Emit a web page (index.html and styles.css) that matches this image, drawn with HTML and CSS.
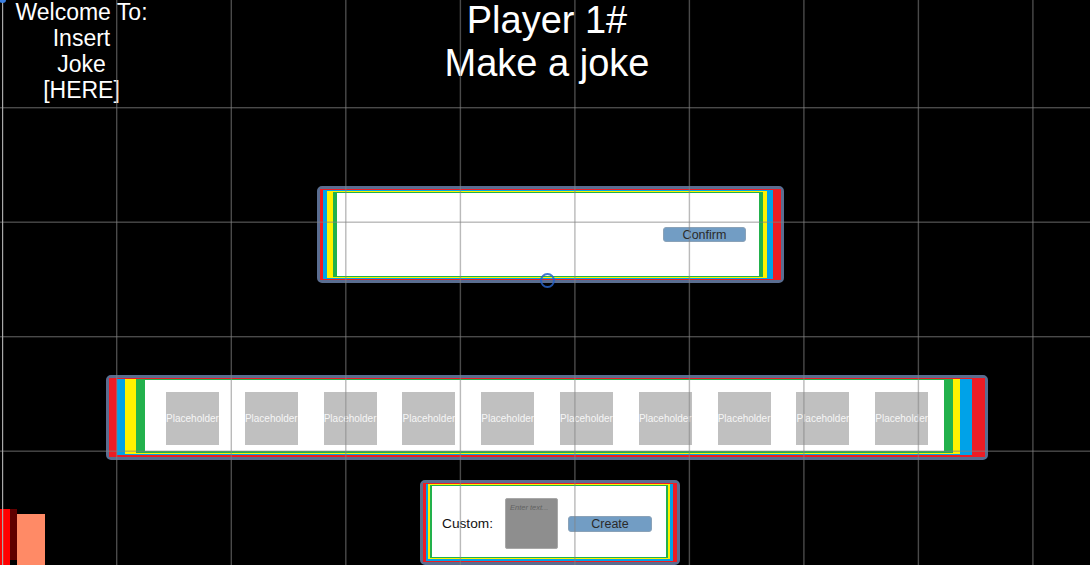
FILE: index.html
```html
<!DOCTYPE html>
<html lang="en">
<head>
<meta charset="utf-8">
<title>Make a joke</title>
<link rel="stylesheet" href="styles.css">
</head>
<body>
<div class="stage">
  <header class="header">
    <div class="welcome">Welcome To:<br>Insert<br>Joke<br>[HERE]</div>
    <h1 class="title">Player 1#<br>Make a joke</h1>
  </header>

  <section class="panel panel-confirm">
    <div class="lay red"><div class="lay blue"><div class="lay yellow"><div class="lay green">
      <div class="inner confirm-inner">
        <button class="btn btn-confirm">Confirm</button>
      </div>
    </div></div></div></div>
    <span class="pivot"></span>
  </section>

  <section class="panel panel-cards">
    <div class="lay red"><div class="lay blue"><div class="lay yellow"><div class="lay green">
      <div class="inner cards-inner">
        <div class="ph">Placeholder</div>
        <div class="ph">Placeholder</div>
        <div class="ph">Placeholder</div>
        <div class="ph">Placeholder</div>
        <div class="ph">Placeholder</div>
        <div class="ph">Placeholder</div>
        <div class="ph">Placeholder</div>
        <div class="ph">Placeholder</div>
        <div class="ph">Placeholder</div>
        <div class="ph">Placeholder</div>
      </div>
    </div></div></div></div>
  </section>

  <div class="bottom-row">
    <div class="corner">
      <span class="c-red"></span>
      <span class="c-dark"></span>
      <span class="c-salmon"></span>
    </div>
    <section class="panel panel-custom">
      <div class="lay red"><div class="lay blue"><div class="lay yellow"><div class="lay green">
        <div class="inner custom-inner">
          <span class="custom-label">Custom:</span>
          <div class="field"><span class="field-ph">Enter text...</span></div>
          <button class="btn btn-create">Create</button>
        </div>
      </div></div></div></div>
    </section>
  </div>

  <svg class="grid" width="1090" height="565" viewBox="0 0 1090 565" aria-hidden="true">
    <g fill="rgba(132,132,132,0.56)">
      <rect x="116" y="0" width="1.4" height="565"/>
      <rect x="230.6" y="0" width="1.4" height="565"/>
      <rect x="345.1" y="0" width="1.4" height="565"/>
      <rect x="459.7" y="0" width="1.4" height="565"/>
      <rect x="574.2" y="0" width="1.4" height="565"/>
      <rect x="688.7" y="0" width="1.4" height="565"/>
      <rect x="803.2" y="0" width="1.4" height="565"/>
      <rect x="917.7" y="0" width="1.4" height="565"/>
      <rect x="1032.2" y="0" width="1.4" height="565"/>
      <rect x="0" y="107" width="1090" height="1.4"/>
      <rect x="0" y="221.5" width="1090" height="1.4"/>
      <rect x="0" y="336" width="1090" height="1.4"/>
      <rect x="0" y="450.5" width="1090" height="1.4"/>
    </g>
    <rect x="2" y="0" width="1.2" height="565" fill="#a8a8a8"/>
    <ellipse cx="2.5" cy="0" rx="3.5" ry="3" fill="#3b7fe0"/>
  </svg>
</div>
</body>
</html>
```

FILE: styles.css
```css
* { box-sizing: border-box; }

html, body {
  margin: 0;
  padding: 0;
  background: #000;
  overflow: hidden;
}

body {
  width: 1090px;
  height: 565px;
  font-family: "Liberation Sans", Arial, sans-serif;
}

.stage {
  position: relative;
  width: 1090px;
  height: 565px;
  display: flex;
  flex-direction: column;
  overflow: hidden;
}

/* header */
.header {
  display: grid;
  grid-template-columns: 163px 768px 159px;
  align-items: start;
}

.welcome {
  margin-top: -1px;
  color: #fff;
  font-size: 23px;
  line-height: 26px;
  text-align: center;
}

.title {
  margin: -1px 0 0;
  color: #fff;
  font-weight: normal;
  font-size: 38px;
  line-height: 43px;
  text-align: center;
}

/* panels */
.panel {
  position: relative;
  display: flex;
  flex: none;
  border: 3px solid #5a6d90;
  border-radius: 5px;
}

.lay {
  display: flex;
  flex: 1 1 auto;
  min-width: 0;
}

.red { background: #ed1c24; }
.blue { background: #00a2e8; }
.yellow { background: #fff200; }
.green { background: #22b14c; }

.inner {
  flex: 1 1 auto;
  background: #fff;
  min-width: 0;
}

/* confirm panel */
.panel-confirm {
  width: 467px;
  height: 97px;
  margin-top: 83px;
  margin-left: 317px;
}
.panel-confirm .red { padding: 1px 8px 1px 3px; }
.panel-confirm .blue { padding: 1px 6px 1px 4px; }
.panel-confirm .yellow { padding: 1px 4px 1px 6px; }
.panel-confirm .green { padding: 1px 4px 1px 4px; }

.confirm-inner {
  display: flex;
  justify-content: flex-end;
  align-items: flex-start;
  padding: 34px 13px 0 0;
}

.btn {
  margin: 0;
  background: #729dc4;
  border: 1px solid #8aa2b8;
  border-radius: 3px;
  color: #2a2a2a;
  font-family: "Liberation Sans", Arial, sans-serif;
  text-align: center;
}

.btn-confirm {
  width: 83px;
  height: 15px;
  padding: 1px 0 0;
  font-size: 12.5px;
  line-height: 12px;
}

.pivot {
  position: absolute;
  left: 220px;
  top: 84px;
  width: 15px;
  height: 15px;
  border: 2px solid rgba(38, 96, 196, 0.85);
  border-radius: 50%;
  z-index: 2;
}

/* placeholder cards panel */
.panel-cards {
  width: 882px;
  height: 85px;
  margin-top: 92px;
  margin-left: 106px;
}
.panel-cards .red { padding: 1px 13px 2px 8px; }
.panel-cards .blue { padding: 0 12px 1px 8px; }
.panel-cards .yellow { padding: 0 7px 1px 11px; }
.panel-cards .green { padding: 1px 9px 2px 9px; }

.cards-inner {
  display: flex;
  align-items: flex-start;
  gap: 25.8px;
  padding: 12px 0 0 21px;
}

.ph {
  flex: none;
  width: 53px;
  height: 53px;
  background: #c0c0c0;
  color: #f6f6f6;
  font-size: 10px;
  line-height: 54px;
  text-align: center;
  white-space: nowrap;
  overflow: hidden;
}

/* bottom row */
.bottom-row {
  display: flex;
  align-items: flex-end;
  margin-top: 20px;
}

.corner {
  display: flex;
  align-items: flex-end;
  width: 45px;
  flex: none;
}

.c-red {
  width: 10px;
  height: 56px;
  background: #ff0000;
}

.c-dark {
  width: 7px;
  height: 51px;
  margin-bottom: 5px;
  background: #600000;
}

.c-salmon {
  width: 28px;
  height: 51px;
  background: #ff8a66;
}

/* custom panel */
.panel-custom {
  width: 260px;
  height: 85px;
  margin-left: 375px;
}
.panel-custom .red { padding: 1px 4px 1px 3px; }
.panel-custom .blue { padding: 0 3px 2px 2px; }
.panel-custom .yellow { padding: 1px 2px 1px 2px; }
.panel-custom .green { padding: 1px 2px 1px 2px; }

.custom-inner {
  display: flex;
  align-items: center;
  padding: 4px 0 0 10px;
}

.custom-label {
  width: 63px;
  flex: none;
  color: #111;
  font-size: 13.7px;
}

.field {
  flex: none;
  width: 53px;
  height: 51px;
  background: #8e8e8e;
  border: 1px solid #a8a8a8;
  border-radius: 2px;
  padding: 4px 0 0 4px;
}

.field-ph {
  display: block;
  color: #626262;
  font-style: italic;
  font-size: 7.5px;
  line-height: 10px;
  white-space: nowrap;
}

.btn-create {
  flex: none;
  width: 84px;
  height: 16px;
  margin-left: 10px;
  padding: 1px 0 0;
  font-size: 12.5px;
  line-height: 13px;
}

/* editor grid overlay */
.grid {
  position: absolute;
  left: 0;
  top: 0;
  pointer-events: none;
  z-index: 5;
}
```
